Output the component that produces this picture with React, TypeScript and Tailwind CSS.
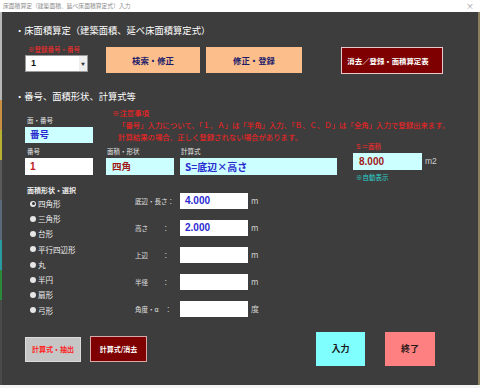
import React from "react";

const jp = { fontFamily: '"Noto Sans CJK JP", "Noto Sans", sans-serif' };
const num = { fontFamily: '"Liberation Sans", "Noto Sans CJK JP", sans-serif' };

function Radio({ label, checked }: { label: string; checked?: boolean }) {
  return (
    <div className="flex h-[15.4px] items-center">
      {checked ? (
        <span className="ml-[3px] flex h-[6px] w-[6px] items-center justify-center rounded-full bg-[#e6e6e6]">
          <span className="h-[3px] w-[3px] rounded-full bg-[#333]" />
        </span>
      ) : (
        <span className="ml-[3px] h-[6px] w-[6px] rounded-full bg-[#e6e6e6]" />
      )}
      <span className="ml-[2px] text-[7.5px] leading-none text-[#eeeeee]">{label}</span>
    </div>
  );
}

function Field({ label, value, unit }: { label: string; value?: string; unit: string }) {
  return (
    <div className="flex h-[16px] items-center">
      <span className="w-[45px] whitespace-pre text-[6.5px] leading-none text-[#e0e0e0]">{label}</span>
      <div className="flex h-[16px] w-[68px] items-center bg-white pl-[5px]">
        <span className="text-[10px] font-bold leading-none text-[#2a2ad0]" style={num}>
          {value}
        </span>
      </div>
      <span className="ml-[3px] text-[8px] leading-none text-[#cfcfcf]">{unit}</span>
    </div>
  );
}

export default function App() {
  return (
    <div className="relative h-[388px] w-[480px] overflow-hidden bg-[#f4f4f4]" style={jp}>
      {/* title bar */}
      <div className="flex h-[12px] items-center justify-between bg-white pl-[3px] pr-[6px]">
        <span className="text-[5.8px] leading-none text-[#8a8a8a]">床面積算定（建築面積、延べ床面積算定式）入力</span>
        <span className="text-[8px] leading-none text-[#9a9a9a]">×</span>
      </div>
      <div className="flex h-[373px]">
        {/* left strip with desktop bits */}
        <div className="flex w-[2px] flex-col">
          <div className="h-[88px] bg-[#b8b8b8]" />
          <div className="h-[30px] bg-[#c89040]" />
          <div className="h-[30px] bg-[#b8b030]" />
          <div className="h-[40px] bg-[#5a5a5a]" />
          <div className="h-[40px] bg-[#5a6a7a]" />
          <div className="h-[30px] bg-[#2a9aa0]" />
          <div className="h-[30px] bg-[#2a8a3a]" />
          <div className="flex-1 bg-[#4a4a4a]" />
        </div>
        {/* panel */}
        <div className="w-[476px] bg-[#3d3d3d]">
          {/* header 1 */}
          <div className="ml-[13px] mt-[11px] h-[14px] text-[9.3px] leading-[14px] text-white">
            ・床面積算定（建築面積、延べ床面積算定式）
          </div>
          {/* row B */}
          <div className="ml-[23px] mt-[7px] flex items-start">
            <div className="flex w-[63px] flex-col">
              <div className="h-[11px] pl-[3px] text-[6.5px] leading-[11px] text-[#ff2a2a]">※登録番号・番号</div>
              <div className="flex h-[17px] items-center justify-between border border-[#9a9a9a] bg-white pl-[5px]">
                <span className="text-[9px] font-bold leading-none text-[#111]" style={num}>1</span>
                <span className="flex h-[15px] w-[8px] items-center justify-center bg-[#efefef] text-[4px] leading-none text-[#333]">▼</span>
              </div>
            </div>
            <button className="ml-[18px] mt-[3px] flex h-[26px] w-[94px] items-center justify-center bg-[#fcbf8b] text-[8.4px] font-bold text-[#1c1c6a]">
              検索・修正
            </button>
            <button className="ml-[6px] mt-[3px] flex h-[26px] w-[96px] items-center justify-center bg-[#fcbf8b] text-[8.4px] font-bold text-[#1c1c6a]">
              修正・登録
            </button>
            <button className="ml-[39px] mt-[3px] flex h-[27px] w-[102px] items-center justify-center border border-[#e8c8c8] bg-[#7e0000] pr-[8px] text-[7.4px] font-bold text-white">
              消去／登録・面積算定表
            </button>
          </div>
          {/* header 2 */}
          <div className="ml-[13px] mt-[15px] h-[14px] text-[9.3px] leading-[14px] text-white">・番号、面積形状、計算式等</div>
          {/* row D */}
          <div className="ml-[23px] mt-[4px] flex items-start">
            <div className="flex w-[68px] flex-col pt-[8px]">
              <div className="h-[10px] pl-[2px] text-[6.5px] leading-[10px] text-[#e6e6e6]">面・番号</div>
              <div className="mt-[2px] flex h-[16px] items-center bg-[#ccffff] pl-[5px]">
                <span className="text-[9.5px] font-bold leading-none text-[#2a2ad0]">番号</span>
              </div>
            </div>
            <div className="ml-[19px] flex flex-col text-[7.4px] leading-[12px] text-[#ff2020]">
              <span>※注意事項</span>
              <span className="pl-[6px]">「番号」入力について、「１、Ａ」は「半角」入力、「Ｂ、Ｃ、Ｄ」は「全角」入力で登録出来ます。</span>
              <span className="pl-[6px]">計算結果の場合、正しく登録されない場合があります。</span>
            </div>
          </div>
          {/* row E */}
          <div className="ml-[23px] mt-[3px] flex h-[29px] items-start">
            <div className="flex w-[68px] flex-col">
              <div className="h-[10px] pl-[2px] text-[6.5px] leading-[10px] text-[#e6e6e6]">番号</div>
              <div className="mt-[2px] flex h-[17px] items-center bg-white pl-[5px]">
                <span className="text-[10px] font-bold leading-none text-[#c01818]" style={num}>1</span>
              </div>
            </div>
            <div className="ml-[13px] flex w-[68px] flex-col">
              <div className="h-[10px] pl-[1px] text-[6.5px] leading-[10px] text-[#e6e6e6]">面積・形状</div>
              <div className="mt-[2px] flex h-[17px] items-center bg-[#ccffff] pl-[6px]">
                <span className="text-[9.5px] font-bold leading-none text-[#a01818]">四角</span>
              </div>
            </div>
            <div className="ml-[6px] flex w-[157px] flex-col">
              <div className="h-[10px] pl-[1px] text-[6.5px] leading-[10px] text-[#e6e6e6]">計算式</div>
              <div className="mt-[2px] flex h-[17px] items-center bg-[#ccffff] pl-[5px]">
                <span className="text-[10px] font-bold leading-none text-[#2a2ad0]">S=底辺×高さ</span>
              </div>
            </div>
            <div className="-mt-[5px] ml-[16px] flex flex-col">
              <div className="h-[10px] pl-[2px] text-[6.5px] leading-[10px] text-[#ff2a2a]">Ｓ＝面積</div>
              <div className="mt-[2px] flex items-center">
                <div className="flex h-[17px] w-[69px] items-center bg-[#ccffff] pl-[6px]">
                  <span className="text-[10px] font-bold leading-none text-[#a01818]" style={num}>8.000</span>
                </div>
                <span className="ml-[3px] text-[8.5px] leading-none text-[#cfcfcf]" style={num}>m2</span>
              </div>
              <div className="mt-[2px] h-[10px] pl-[3px] text-[6.5px] leading-[10px] text-[#2ad6d0]">※自動表示</div>
            </div>
          </div>
          {/* row F */}
          <div className="mt-[10px] flex h-[133px]">
            <div className="ml-[25px] flex w-[108px] flex-col">
              <div className="h-[11px] text-[7px] font-bold leading-[10px] text-[#f0f0f0]">面積形状・選択</div>
              <Radio label="四角形" checked />
              <Radio label="三角形" />
              <Radio label="台形" />
              <Radio label="平行四辺形" />
              <Radio label="丸" />
              <Radio label="半円" />
              <Radio label="扇形" />
              <Radio label="弓形" />
            </div>
            <div className="flex flex-col gap-[11px] pt-[8px]">
              <Field label={"底辺・長さ："} value="4.000" unit="m" />
              <Field label={"高さ　　 ："} value="2.000" unit="m" />
              <Field label={"上辺　　 ："} unit="m" />
              <Field label={"半径　　 ："} unit="m" />
              <Field label={"角度・α　："} unit="度" />
            </div>
          </div>
          {/* row G */}
          <div className="mt-[14px] flex h-[34px] items-center">
            <button className="ml-[23px] flex h-[25px] w-[56px] items-center justify-center border border-[#dcdcdc] bg-[#c6c6c6] text-[7px] font-bold text-[#ff2020]">
              計算式・抽出
            </button>
            <button className="ml-[9px] flex h-[26px] w-[57px] items-center justify-center border border-[#d8a8a8] bg-[#7e0000] text-[7px] font-bold text-white">
              計算式/消去
            </button>
            <button className="ml-[169px] flex h-[34px] w-[49px] items-center justify-center bg-[#80ffff] text-[9px] font-bold text-[#1a1a1a]">
              入力
            </button>
            <button className="ml-[20px] flex h-[34px] w-[50px] items-center justify-center bg-[#ff8080] text-[9px] font-bold text-[#2a1a1a]">
              終了
            </button>
          </div>
        </div>
        <div className="w-[2px] bg-[#8a8060]" />
      </div>
    </div>
  );
}
